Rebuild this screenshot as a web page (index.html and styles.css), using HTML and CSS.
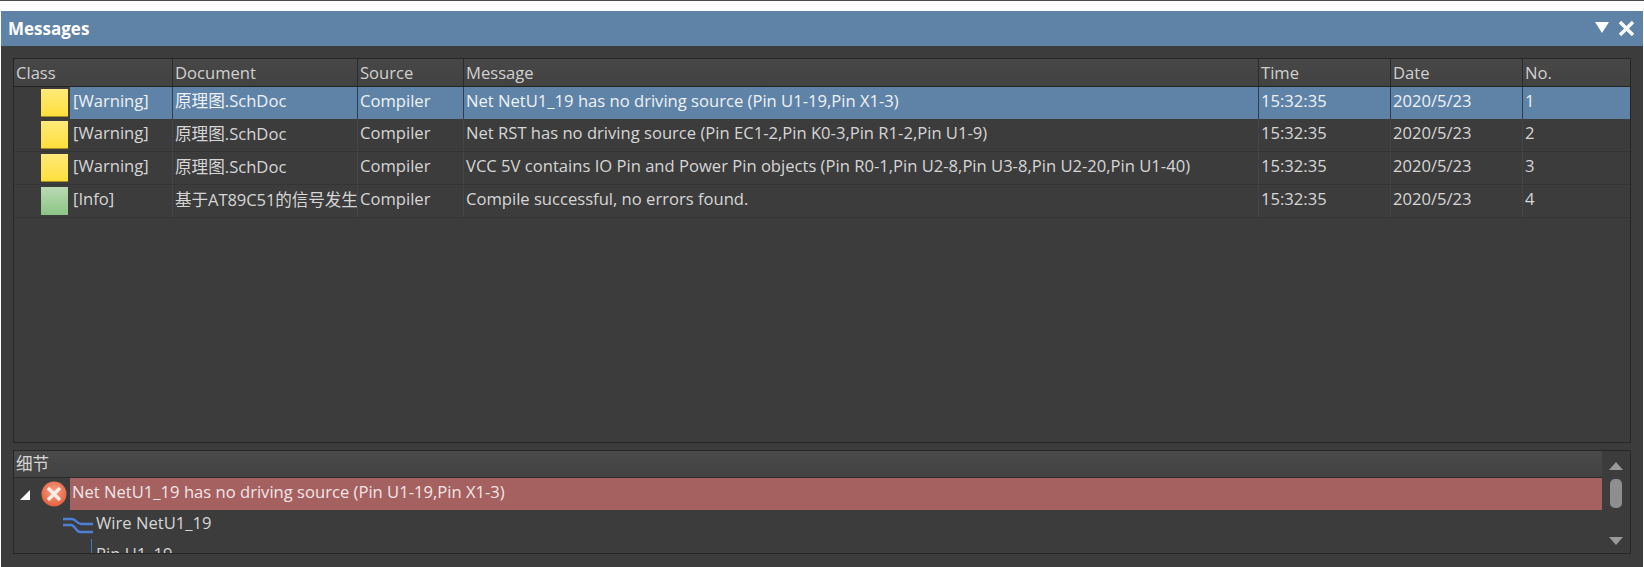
FILE: index.html
```html
<!DOCTYPE html>
<html lang="en">
<head>
    <meta charset="UTF-8">
    <title>Messages</title>
    <link rel="stylesheet" href="styles.css">
</head>
<body>
    <div class="top-line"></div>
    <div class="panel">
        <div class="title-bar">
            <span class="title">Messages</span>
            <svg class="title-icons" width="42" height="16" viewBox="0 0 42 16">
                <path d="M0 2H14L7 13Z" fill="#fff"/>
                <path d="M25 2L38 15M38 2L25 15" stroke="#fff" stroke-width="3.4" fill="none"/>
            </svg>
        </div>
        <div class="panel-body">
            <div class="messages">
                <div class="row head">
                    <div class="cell span-class">Class</div>
                    <div class="cell">Document</div>
                    <div class="cell">Source</div>
                    <div class="cell">Message</div>
                    <div class="cell">Time</div>
                    <div class="cell">Date</div>
                    <div class="cell">No.</div>
                </div>
                <div class="row selected">
                    <div class="gutter"><span class="note warning"></span></div>
                    <div class="cell label">[Warning]</div>
                    <div class="cell">原理图.SchDoc</div>
                    <div class="cell">Compiler</div>
                    <div class="cell">Net NetU1_19 has no driving source (Pin U1-19,Pin X1-3)</div>
                    <div class="cell">15:32:35</div>
                    <div class="cell">2020/5/23</div>
                    <div class="cell">1</div>
                </div>
                <div class="row">
                    <div class="gutter"><span class="note warning"></span></div>
                    <div class="cell label">[Warning]</div>
                    <div class="cell">原理图.SchDoc</div>
                    <div class="cell">Compiler</div>
                    <div class="cell">Net RST has no driving source (Pin EC1-2,Pin K0-3,Pin R1-2,Pin U1-9)</div>
                    <div class="cell">15:32:35</div>
                    <div class="cell">2020/5/23</div>
                    <div class="cell">2</div>
                </div>
                <div class="row">
                    <div class="gutter"><span class="note warning"></span></div>
                    <div class="cell label">[Warning]</div>
                    <div class="cell">原理图.SchDoc</div>
                    <div class="cell">Compiler</div>
                    <div class="cell">VCC 5V contains IO Pin and Power Pin objects (Pin R0-1,Pin U2-8,Pin U3-8,Pin U2-20,Pin U1-40)</div>
                    <div class="cell">15:32:35</div>
                    <div class="cell">2020/5/23</div>
                    <div class="cell">3</div>
                </div>
                <div class="row">
                    <div class="gutter"><span class="note info"></span></div>
                    <div class="cell label">[Info]</div>
                    <div class="cell tight">基于AT89C51的信号发生</div>
                    <div class="cell">Compiler</div>
                    <div class="cell">Compile successful, no errors found.</div>
                    <div class="cell">15:32:35</div>
                    <div class="cell">2020/5/23</div>
                    <div class="cell">4</div>
                </div>
            </div>
            <div class="details">
                <div class="details-main">
                    <div class="details-head">细节</div>
                    <div class="tree-row">
                        <svg class="tree-arrow" width="10" height="10" viewBox="0 0 10 10"><path d="M10 0V10H0Z" fill="#fff"/></svg>
                        <svg class="error-icon" width="26" height="26" viewBox="0 0 26 26">
                            <defs>
                                <radialGradient id="errorFill" cx="50%" cy="40%" r="60%">
                                    <stop offset="0" stop-color="#f7a184"/>
                                    <stop offset="1" stop-color="#e4603f"/>
                                </radialGradient>
                            </defs>
                            <circle cx="13" cy="13" r="12.5" fill="url(#errorFill)"/>
                            <path d="M7 7L19 19M19 7L7 19" stroke="#fdeee6" stroke-width="3.4" fill="none"/>
                        </svg>
                        <div class="tree-text">Net NetU1_19 has no driving source (Pin U1-19,Pin X1-3)</div>
                    </div>
                    <div class="tree-row child">
                        <svg class="wire-icon" width="32" height="20" viewBox="0 0 32 20">
                            <path d="M1 4H10C14 4 15 9 19 9H31M1 10H9C13 10 14 17 18 17H31" stroke="#4d7fd6" stroke-width="2.4" fill="none"/>
                        </svg>
                        <div class="tree-label">Wire NetU1_19</div>
                    </div>
                    <div class="tree-row grandchild">
                        <span class="tree-line"></span>
                        <div class="tree-label">Pin U1_19</div>
                    </div>
                </div>
                <div class="scrollbar">
                    <svg width="14" height="8" viewBox="0 0 14 8"><path d="M7 0L14 8H0Z" fill="#9a9a9a"/></svg>
                    <span class="thumb"></span>
                    <svg class="arrow-down" width="14" height="8" viewBox="0 0 14 8"><path d="M0 0H14L7 8Z" fill="#9a9a9a"/></svg>
                </div>
            </div>
        </div>
    </div>
</body>
</html>
```

FILE: styles.css
```css
* {
    margin: 0;
    padding: 0;
    box-sizing: border-box;
}

html, body {
    height: 100%;
    overflow: hidden;
}

body {
    display: flex;
    flex-direction: column;
    background: #fff;
    font-family: 'Open Sans', 'Noto Sans CJK SC', sans-serif;
    font-size: 16.6px;
    color: #d6d6d6;
}

.top-line {
    height: 1px;
    background: #4a4a4a;
    margin-bottom: 10px;
}

.panel {
    flex: 1;
    min-height: 0;
    display: flex;
    flex-direction: column;
    margin: 0 1px;
    background: #3c3c3c;
}

.title-bar {
    height: 35px;
    display: flex;
    justify-content: space-between;
    align-items: center;
    padding: 0 6px 0 7px;
    background: #5f83a6;
    color: #fff;
}

.title {
    font-size: 17px;
    font-weight: 700;
}

.title-icons {
    margin-top: -2px;
}

.panel-body {
    flex: 1;
    min-height: 0;
    display: flex;
    flex-direction: column;
    gap: 7px;
    padding: 12px 12px 13px;
}

.messages {
    height: 385px;
    flex-shrink: 0;
    border: 1px solid #262626;
}

.row {
    display: grid;
    grid-template-columns: 56px 102px 185px 106px 795px 132px 132px 1fr;
    height: 33px;
    border-bottom: 1px solid #353535;
}

.row.head {
    height: 28px;
    background: linear-gradient(#474747, #424242);
    border-bottom: 1px solid #232323;
}

.row.selected {
    height: 32px;
    border-bottom: none;
}

.cell {
    display: flex;
    align-items: center;
    padding: 0 0 5px 2px;
    overflow: hidden;
    white-space: nowrap;
    border-left: 1px solid #454545;
}

.head .cell {
    padding-bottom: 1px;
    border-left-color: #2b2b2b;
    color: #d0d0d0;
}

.span-class {
    grid-column: span 2;
    padding-left: 2px;
    border-left: none !important;
}

.cell.label {
    padding-left: 3px;
    border-left: none;
}

.cell.tight {
    letter-spacing: -0.1px;
}

.selected .cell {
    padding-bottom: 6px;
    background: #5f83a6;
    color: #eef2f6;
    border-left-color: #2c3f52;
}

.selected .cell.label {
    border-left: none;
}

.gutter {
    display: flex;
    align-items: center;
    justify-content: flex-end;
    padding-right: 2px;
}

.note {
    width: 27px;
    height: 28px;
}

.note.warning {
    background: linear-gradient(#ffe97a, #ffdf3c);
    border-bottom: 1px solid #a58e1e;
}

.note.info {
    background: linear-gradient(#b9d9b3, #8cc585);
}

.details {
    flex: 1;
    min-height: 0;
    display: flex;
    overflow: hidden;
    border: 1px solid #262626;
}

.details-main {
    flex: 1;
    overflow: hidden;
}

.details-head {
    height: 27px;
    display: flex;
    align-items: center;
    padding: 0 0 3px 2px;
    background: linear-gradient(#4a4a4a, #424242);
    border-bottom: 1px solid #2a2a2a;
}

.tree-row {
    height: 32px;
    display: flex;
    align-items: center;
    white-space: nowrap;
}

.tree-arrow {
    margin-left: 6px;
    margin-top: 2px;
}

.error-icon {
    margin-left: 11px;
    margin-right: 3px;
    flex-shrink: 0;
}

.tree-text {
    flex: 1;
    align-self: stretch;
    display: flex;
    align-items: center;
    padding: 0 0 6px 2px;
    background: #a56060;
    color: #f1e6e6;
}

.tree-label {
    padding-bottom: 4px;
}

.child {
    height: 29px;
    padding-left: 48px;
    gap: 2px;
}

.grandchild {
    padding-left: 77px;
    gap: 4px;
}

.tree-line {
    width: 1px;
    height: 32px;
    background: #3f78b4;
}

.scrollbar {
    width: 28px;
    display: flex;
    flex-direction: column;
    align-items: center;
    padding-top: 11px;
}

.thumb {
    width: 12px;
    height: 29px;
    margin-top: 9px;
    background: #8e8e8e;
    border-radius: 5px;
}

.arrow-down {
    margin-top: 29px;
}
```
